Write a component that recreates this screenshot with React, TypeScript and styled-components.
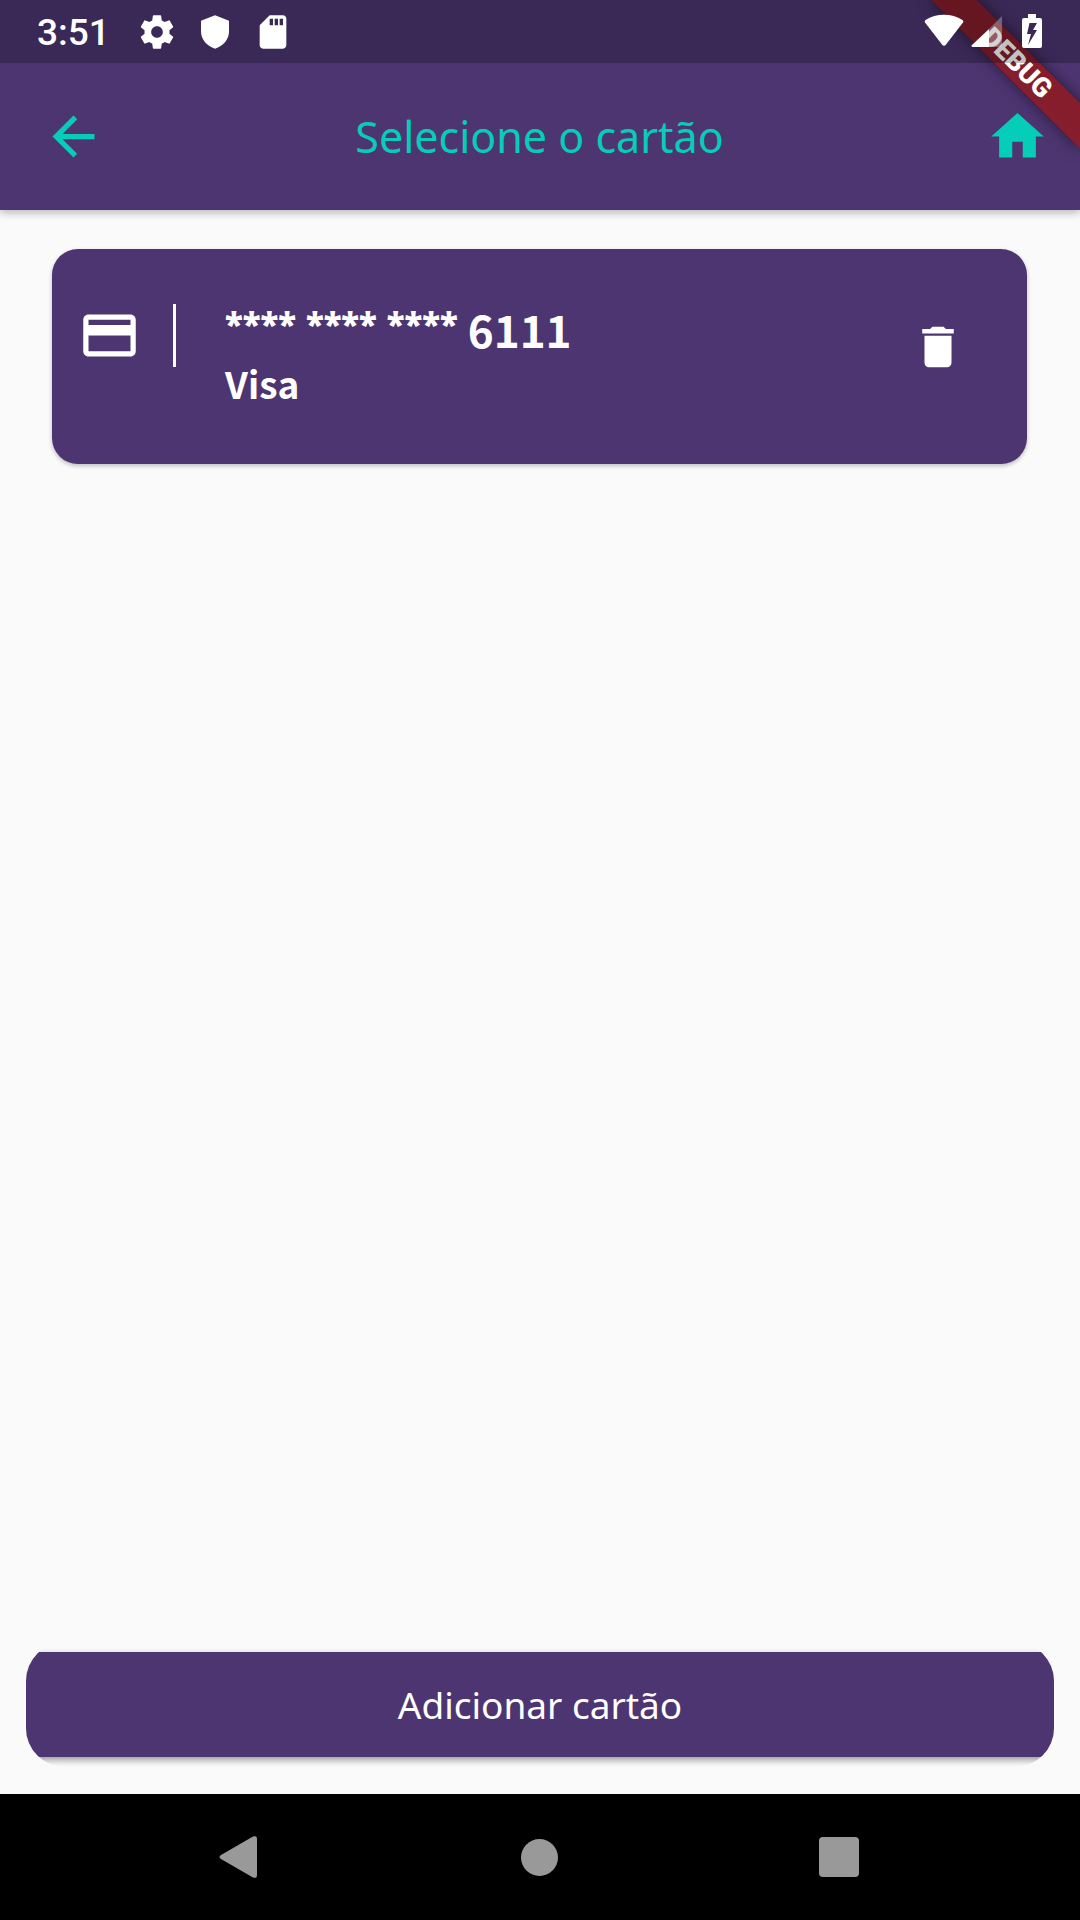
import React from 'react';
import styled, { createGlobalStyle } from 'styled-components';

const GlobalStyle = createGlobalStyle`
  *, *::before, *::after { box-sizing: border-box; }
  body { margin: 0; background: #fafafa; }
  button { margin: 0; padding: 0; border: 0; background: none; color: inherit; font: inherit; cursor: pointer; }
  p, h1, h2, ul { margin: 0; padding: 0; }
  svg { display: block; fill: currentColor; }
`;

const purple = '#4d3572';
const teal = '#06cdb8';
const sans = "'Noto Sans', 'Open Sans', sans-serif";

const Screen = styled.div`
  position: relative;
  display: flex;
  flex-direction: column;
  min-height: 100vh;
  background: #fafafa;
  font-family: ${sans};
`;

const Header = styled.header`
  position: relative;
  overflow: hidden;
  background: ${purple};
`;

const HeaderShadow = styled.div`
  box-shadow: 0 3px 8px rgba(0, 0, 0, 0.26);
`;

const StatusBar = styled.div`
  position: relative;
  z-index: 2;
  display: flex;
  align-items: center;
  justify-content: space-between;
  height: 63px;
  padding: 0 38px 0 37px;
  background: rgba(0, 0, 0, 0.24);
  color: #fff;
`;

const StatusGroup = styled.div<{ $gap: number }>`
  display: flex;
  align-items: center;
  gap: ${(p) => p.$gap}px;
`;

const Clock = styled.time`
  font: 500 37px/44px Roboto, sans-serif;
  padding-top: 2px;
  margin-right: 9px;
`;

const AppBar = styled.div`
  display: grid;
  grid-template-columns: 63px 1fr 63px;
  align-items: center;
  height: 147px;
  padding: 0 31px 0 42px;
  color: ${teal};
`;

const Title = styled.h1`
  padding-right: 12px;
  font-size: 43px;
  line-height: 56px;
  font-weight: 400;
  text-align: center;
`;

const RibbonCorner = styled.div`
  position: absolute;
  z-index: 1;
  top: 0;
  right: 0;
  width: 148px;
  height: 148px;
  pointer-events: none;
`;

const Ribbon = styled.div`
  position: absolute;
  top: 47px;
  left: -20px;
  width: 210px;
  height: 32px;
  transform: rotate(45deg);
  background:
    linear-gradient(rgba(183, 28, 28, 0.63), rgba(183, 28, 28, 0.63)),
    rgba(0, 0, 0, 0.36);
  box-shadow: 0 0 16px rgba(0, 0, 0, 0.5);
  color: #fff;
  font: 900 27px/32px Roboto, sans-serif;
  text-align: center;
`;

const Main = styled.main`
  flex: 1;
  display: flex;
  flex-direction: column;
  justify-content: space-between;
  padding: 39px 26px 27px;
`;

const CardList = styled.ul`
  list-style: none;
  padding: 0 27px 0 26px;
`;

const CardItem = styled.li`
  display: flex;
  align-items: flex-start;
  height: 215px;
  padding: 55px 62px 0 26px;
  border-radius: 26px;
  background: ${purple};
  box-shadow: 0 2px 4px rgba(0, 0, 0, 0.24);
  color: #fff;
`;

const CardMark = styled.div`
  padding-right: 32px;
  border-right: 3px solid #fff;
`;

const CardText = styled.div`
  flex: 1;
  padding-left: 49px;
  font-family: 'Noto Sans CJK JP', 'Noto Sans', sans-serif;
  font-weight: 700;
`;

const CardNumber = styled.h2`
  font-size: 44px;
  line-height: 50px;
`;

const Masked = styled.span`
  font-family: 'Open Sans', 'Noto Sans', sans-serif;
  font-size: 33px;
  line-height: 24px;
  font-weight: 800;
  vertical-align: 11px;
`;

const CardBrand = styled.p`
  font-size: 37px;
  line-height: 58px;
`;

const DeleteButton = styled.button`
  margin-top: 16px;
`;

const ButtonFrame = styled.div`
  overflow: hidden;
  padding: 10px 0;
  border-radius: 39px;
`;

const AddButton = styled.button`
  display: block;
  width: 100%;
  height: 105px;
  background: ${purple};
  box-shadow: 0 3px 7px rgba(0, 0, 0, 0.4);
  color: #fff;
  font-size: 37px;
  line-height: 48px;
`;

const NavBar = styled.nav`
  display: flex;
  height: 126px;
  padding: 0 91px 0 90px;
  background: #000;
  color: #999;
`;

const NavButton = styled.button`
  flex: 1;
  display: grid;
  place-items: center;
`;

type IconProps = { d: string; size: number };

const Icon = ({ d, size }: IconProps) => (
  <svg width={size} height={size} viewBox="0 0 24 24" aria-hidden="true">
    <path d={d} />
  </svg>
);

const paths = {
  settings:
    'M19.43 12.98c.04-.32.07-.64.07-.98s-.03-.66-.07-.98l2.11-1.65c.19-.15.24-.42.12-.64l-2-3.46c-.12-.22-.39-.3-.61-.22l-2.49 1c-.52-.4-1.08-.73-1.69-.98l-.38-2.65C14.46 2.18 14.25 2 14 2h-4c-.25 0-.46.18-.49.42l-.38 2.65c-.61.25-1.17.59-1.69.98l-2.49-1c-.23-.09-.49 0-.61.22l-2 3.46c-.13.22-.07.49.12.64l2.11 1.65c-.04.32-.07.65-.07.98s.03.66.07.98l-2.11 1.65c-.19.15-.24.42-.12.64l2 3.46c.12.22.39.3.61.22l2.49-1c.52.4 1.08.73 1.69.98l.38 2.65c.03.24.24.42.49.42h4c.25 0 .46-.18.49-.42l.38-2.65c.61-.25 1.17-.59 1.69-.98l2.49 1c.23.09.49 0 .61-.22l2-3.46c.12-.22.07-.49-.12-.64l-2.11-1.65zM12 15.5c-1.93 0-3.5-1.57-3.5-3.5s1.57-3.5 3.5-3.5 3.5 1.57 3.5 3.5-1.57 3.5-3.5 3.5z',
  shield: 'M12 2 3.6 5.3v6.4c0 4.8 3.6 8.9 8.4 10.3 4.8-1.4 8.4-5.5 8.4-10.3V5.3L12 2z',
  sd: 'M18 2h-8L4.02 8 4 20c0 1.1.9 2 2 2h12c1.1 0 2-.9 2-2V4c0-1.1-.9-2-2-2zm-6 6h-2V4h2v4zm3 0h-2V4h2v4zm3 0h-2V4h2v4z',
  back: 'M20 11H7.83l5.59-5.59L12 4l-8 8 8 8 1.41-1.41L7.83 13H20v-2z',
  home: 'M10 20v-6h4v6h5v-8h3L12 3 2 12h3v8z',
  card: 'M20 4H4c-1.11 0-1.99.89-1.99 2L2 18c0 1.11.89 2 2 2h16c1.11 0 2-.89 2-2V6c0-1.11-.89-2-2-2zm0 14H4v-6h16v6zm0-10H4V6h16v2z',
  trash: 'M6 19c0 1.1.9 2 2 2h8c1.1 0 2-.9 2-2V7H6v12zM19 4h-3.5l-1-1h-5l-1 1H5v2h14V4z',
};

const WifiIcon = () => (
  <svg width="40" height="40" viewBox="0 0 40 40" aria-hidden="true">
    <path d="M1 10.500Q0 9 1.500 8C12 1 28 1 38.500 8Q40 9 39 10.500L22 32.500Q20 35 18 32.500Z" />
  </svg>
);

const SignalIcon = () => (
  <svg width="31" height="40" viewBox="0 0 31 40" aria-hidden="true">
    <path d="M31 4v29q0 2-2 2H18V17z" opacity="0.3" />
    <path d="M18 17v18H1.500q-2-.5-.5-2z" />
  </svg>
);

const BatteryIcon = () => (
  <svg width="20" height="40" viewBox="0 0 20 40" aria-hidden="true">
    <path
      fillRule="evenodd"
      d="M6 2h8v4h4q2 0 2 2v26q0 2-2 2H2q-2 0-2-2V8q0-2 2-2h4zM7.500 11 5 22h4l-3 11 9-15h-4l4-7z"
    />
  </svg>
);

export default function App() {
  return (
    <>
      <GlobalStyle />
      <Screen>
        <HeaderShadow>
          <Header>
            <StatusBar>
              <StatusGroup $gap={18}>
                <Clock>3:51</Clock>
                <Icon d={paths.settings} size={40} />
                <Icon d={paths.shield} size={40} />
                <Icon d={paths.sd} size={40} />
              </StatusGroup>
              <StatusGroup $gap={7}>
                <WifiIcon />
                <StatusGroup $gap={20}>
                  <SignalIcon />
                  <BatteryIcon />
                </StatusGroup>
              </StatusGroup>
            </StatusBar>
            <AppBar>
              <button type="button" aria-label="Voltar">
                <Icon d={paths.back} size={63} />
              </button>
              <Title>Selecione o cartão</Title>
              <button type="button" aria-label="Início">
                <Icon d={paths.home} size={63} />
              </button>
            </AppBar>
            <RibbonCorner>
              <Ribbon>DEBUG</Ribbon>
            </RibbonCorner>
          </Header>
        </HeaderShadow>
        <Main>
          <CardList>
            <CardItem>
              <CardMark>
                <Icon d={paths.card} size={63} />
              </CardMark>
              <CardText>
                <CardNumber>
                  <Masked>****</Masked> <Masked>****</Masked> <Masked>****</Masked> 6111
                </CardNumber>
                <CardBrand>Visa</CardBrand>
              </CardText>
              <DeleteButton type="button" aria-label="Excluir cartão">
                <Icon d={paths.trash} size={54} />
              </DeleteButton>
            </CardItem>
          </CardList>
          <ButtonFrame>
            <AddButton type="button">Adicionar cartão</AddButton>
          </ButtonFrame>
        </Main>
        <NavBar>
          <NavButton type="button" aria-label="Voltar ao anterior">
            <svg width="42" height="42" viewBox="0 0 42 42" aria-hidden="true">
              <path d="M2 19 34 .600Q38 -1 38 3v36q0 4-4 2.400L2 23q-3-2 0-4z" />
            </svg>
          </NavButton>
          <NavButton type="button" aria-label="Tela inicial">
            <svg width="37" height="37" viewBox="0 0 37 37" aria-hidden="true">
              <circle cx="18.500" cy="18.500" r="18.500" />
            </svg>
          </NavButton>
          <NavButton type="button" aria-label="Recentes">
            <svg width="40" height="40" viewBox="0 0 40 40" aria-hidden="true">
              <rect width="40" height="40" rx="4" />
            </svg>
          </NavButton>
        </NavBar>
      </Screen>
    </>
  );
}
